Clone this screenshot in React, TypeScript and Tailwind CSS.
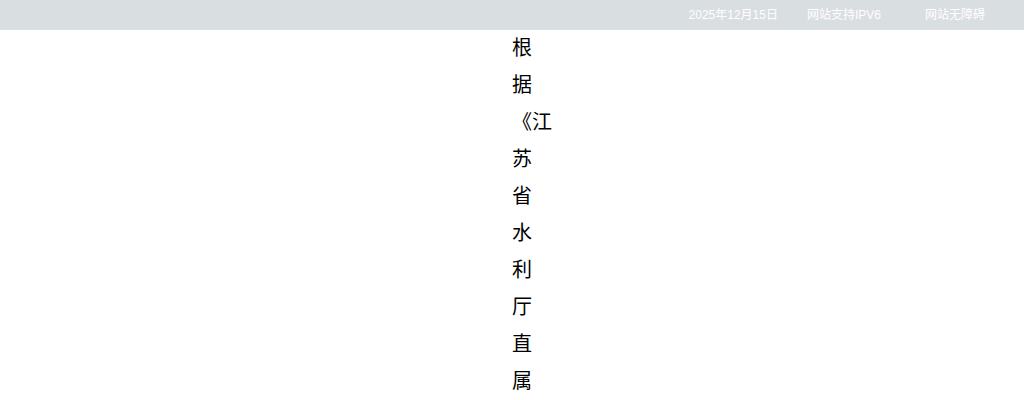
const body =
  "根据《江苏省水利厅直属单位公开招聘工作人员实施办法》等有关规定，经研究决定，现将有关事项公告如下。";

export default function App() {
  return (
    <div className="min-h-[400px] w-[1024px] overflow-hidden bg-white font-['Liberation_Sans','Noto_Sans_CJK_SC',sans-serif]">
      <div className="flex h-[30px] items-center justify-end bg-[#d9dee0] pr-[39px] text-[12px] leading-[30px] text-white">
        <span>2025年12月15日</span>
        <span className="ml-[29px]">网站支持IPV6</span>
        <span className="ml-[44px]">网站无障碍</span>
      </div>
      <div className="pl-[512px]">
        <div className="w-5 text-[20px] leading-[37px] text-black">{body}</div>
      </div>
    </div>
  );
}
